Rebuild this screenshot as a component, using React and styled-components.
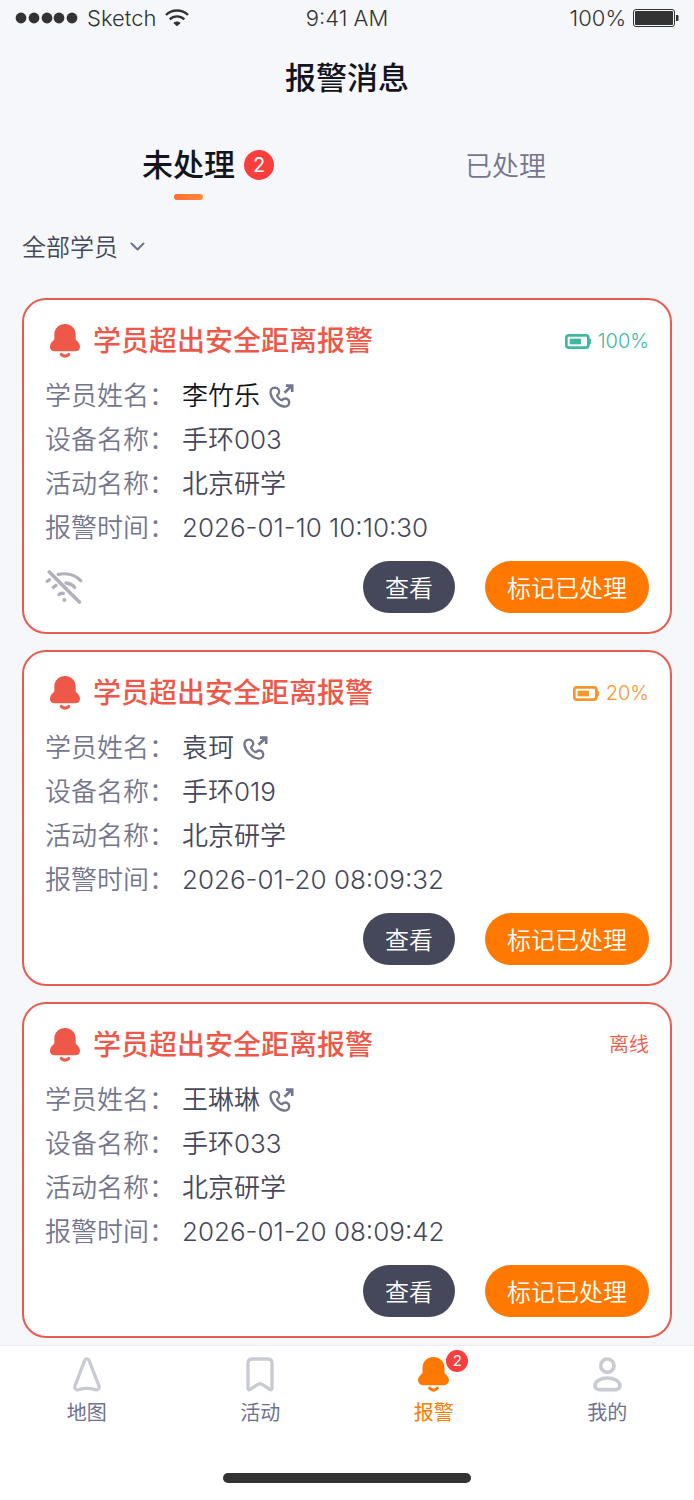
import { useState } from 'react'
import styled, { createGlobalStyle } from 'styled-components'

const GlobalStyle = createGlobalStyle`
    * {
        box-sizing: border-box;
    }
    body {
        margin: 0;
        background: #f5f7fb;
        font-family: Inter, "Noto Sans CJK SC", sans-serif;
    }
    button, select {
        font-family: inherit;
        border: 0;
        padding: 0;
        background: none;
        cursor: pointer;
    }
`

const Page = styled.div`
    display: flex;
    flex-direction: column;
    min-height: 100vh;
`
const StatusBar = styled.div`
    display: grid;
    grid-template-columns: 1fr auto 1fr;
    align-items: center;
    height: 36px;
    padding: 0 15px;
    font-size: 22px;
    font-weight: 300;
    color: #333;
`
const StatusGroup = styled.div`
    display: flex;
    align-items: center;
    gap: ${props => props.$gap};
    justify-content: ${props => props.$end ? 'flex-end' : 'flex-start'};
`
const Title = styled.h1`
    margin: 0;
    font-size: 31px;
    line-height: 84px;
    font-weight: 500;
    text-align: center;
    color: #14151c;
`
const Tabs = styled.div`
    display: grid;
    grid-template-columns: 1fr 1fr;
    padding: 20px 30px 0;
`
const Tab = styled.button`
    display: flex;
    flex-direction: column;
    align-items: center;
    height: 60px;
    font-size: ${props => props.$active ? '31px' : '27px'};
    font-weight: ${props => props.$active ? 500 : 350};
    line-height: ${props => props.$active ? '50px' : '54px'};
    color: ${props => props.$active ? '#14151c' : '#74768e'};
`
const TabText = styled.span`
    position: relative;
`
const TabLine = styled.span`
    width: 29px;
    height: 6px;
    margin-top: 4px;
    border-radius: 3px;
    background: linear-gradient(90deg, #ff6d33, #ff8a3a);
`
const Badge = styled.span`
    position: absolute;
    left: 100%;
    border-radius: 50%;
    background: #fa3e3e;
    color: #fff;
    font-weight: 400;
    text-align: center;
`
const TabBadge = styled(Badge)`
    top: 10px;
    width: 30px;
    margin-left: 9px;
    font-size: 20px;
    line-height: 30px;
`
const NavBadge = styled(Badge)`
    top: -7px;
    width: 22px;
    margin-left: -3px;
    font-size: 15px;
    line-height: 22px;
`
const Filter = styled.label`
    display: flex;
    align-items: center;
    align-self: flex-start;
    gap: 12px;
    height: 50px;
    margin: 22px 22px 26px;
`
const FilterSelect = styled.select`
    appearance: none;
    font-size: 24px;
    font-weight: 350;
    color: #45475a;
`
const Cards = styled.main`
    display: flex;
    flex-direction: column;
    gap: 16px;
    padding: 0 22px 6px;
`
const Card = styled.article`
    padding: 19px 21px;
    border: 2px solid #e65c4d;
    border-radius: 24px;
    background: #fff;
`
const CardHead = styled.div`
    display: flex;
    align-items: center;
    height: 44px;
    margin-bottom: 11px;
    padding-left: 5px;
    color: #ee5848;
`
const CardTitle = styled.h2`
    flex: 1;
    margin: 0 0 0 13px;
    font-size: 28px;
    font-weight: 500;
    line-height: 42px;
`
const DeviceState = styled.div`
    display: flex;
    align-items: center;
    gap: 7px;
    font-size: 20px;
    font-weight: 350;
    line-height: 28px;
    color: ${props => props.$color};
`
const Info = styled.dl`
    margin: 0;
    font-size: 26px;
    font-weight: 350;
    line-height: 44px;
`
const InfoRow = styled.div`
    display: flex;
    height: 44px;
`
const Label = styled.dt`
    width: 137px;
    color: #74768e;
`
const Value = styled.dd`
    display: flex;
    align-items: center;
    gap: 9px;
    margin: 0;
    color: ${props => props.$dark ? '#14151c' : '#45475a'};
`
const CallButton = styled.button`
    display: flex;
`
const CardFoot = styled.div`
    display: flex;
    align-items: center;
    margin-top: 11px;
`
const Actions = styled.div`
    display: flex;
    gap: 30px;
    margin-left: auto;
`
const Action = styled.button`
    height: 52px;
    padding: 0 22px 2px;
    border-radius: 26px;
    font-size: 24px;
    font-weight: 350;
    color: #fff;
    background: ${props => props.$primary ? '#ff7800' : '#45475a'};
`
const BottomBar = styled.footer`
    margin-top: auto;
    padding: 11px 0 17px;
    border-top: 1px solid #eff0f5;
    background: #fff;
`
const Nav = styled.nav`
    display: grid;
    grid-template-columns: repeat(4, 1fr);
`
const NavItem = styled.a`
    display: flex;
    flex-direction: column;
    align-items: center;
    gap: 6px;
    font-size: 20px;
    font-weight: 400;
    line-height: 30px;
    text-decoration: none;
    color: ${props => props.$active ? '#ff7800' : '#6f7190'};
`
const NavIcon = styled.span`
    position: relative;
    display: flex;
    color: ${props => props.$active ? '#ff7800' : '#c9cbd2'};
`
const HomeIndicator = styled.div`
    width: 248px;
    height: 10px;
    margin: 45px auto 0;
    border-radius: 5px;
    background: #333;
`

const SignalIcon = () => (
    <svg width="63" height="12" viewBox="0 0 63 12" fill="#333">
        {[6, 19, 32, 44, 57].map(x => <circle key={x} cx={x} cy="6" r="5.4" />)}
    </svg>
)

const WifiIcon = () => (
    <svg width="24" height="18" viewBox="0 0 72 54" fill="none" stroke="#333" strokeWidth="7">
        <path d="M3 18C21 0 51 0 69 18" />
        <path d="M14 31C27 19 45 19 58 31" />
        <path d="M36 52L25 42C31 36 41 36 47 42Z" fill="#333" stroke="none" />
    </svg>
)

const PhoneBattery = () => (
    <svg width="46" height="18" viewBox="0 0 46 18">
        <rect x="0.5" y="0.5" width="41" height="17" rx="2.5" fill="none" stroke="#333" />
        <rect x="2" y="2" width="38" height="14" rx="1" fill="#333" />
        <path d="M43 6h1.5a1 1 0 0 1 1 1v4a1 1 0 0 1-1 1H43z" fill="#333" />
    </svg>
)

const ChevronIcon = () => (
    <svg width="15" height="10" viewBox="0 0 15 10" fill="none" stroke="#6f7190" strokeWidth="2" strokeLinecap="round" strokeLinejoin="round">
        <path d="M1.500 1.500L7.500 7.500L13.500 1.500" />
    </svg>
)

const BellIcon = ({ width = 30, height = 34 }) => (
    <svg width={width} height={height} viewBox="0 0 90 102" fill="currentColor">
        <path d="M45 0C63 0 77 13 77 31V45C77 50 90 54 90 68C90 77 84 82 76 82H14C6 82 0 77 0 68C0 54 13 50 13 45V31C13 13 27 0 45 0Z" />
        <path d="M34 91Q45 102 56 91" fill="none" stroke="currentColor" strokeWidth="9" strokeLinecap="round" />
    </svg>
)

const BatteryIcon = () => (
    <svg width="26" height="15" viewBox="0 0 78 45" fill="currentColor">
        <rect x="4" y="4" width="66" height="37" rx="7" fill="none" stroke="currentColor" strokeWidth="8" />
        <rect x="14" y="14" width="34" height="17" />
        <path d="M70 11L76 14Q78 15 78 18V27Q78 30 76 31L70 34Z" />
    </svg>
)

const CallIcon = () => (
    <svg width="25" height="24" viewBox="0 0 74 72" fill="none" stroke="#74768e" strokeWidth="7" strokeLinejoin="round">
        <path d="M17 11C9 11 3 17 4 27C7 47 27 66 47 68C56 68 61 62 60 54C59 45 50 41 43 45C40 47 39 50 36 48C30 45 26 40 24 36C23 33 26 32 29 28C33 19 26 11 17 11Z" />
        <path d="M46 26L67 6M50 5H69V24" strokeLinejoin="miter" strokeWidth="8" />
    </svg>
)

const WifiOffIcon = () => (
    <svg width="38" height="34" viewBox="0 0 112 102" fill="none" stroke="#b0b1bb" strokeWidth="10" strokeLinecap="round">
        <path d="M12 6L102 96" strokeWidth="11" />
        <path d="M39 13C64 8 90 15 106 32" />
        <path d="M62 39C72 40 82 45 88 52" />
        <path d="M6 34L12 29" />
        <path d="M24 52L32 46" />
        <path d="M41 74C44 71 49 69 54 70" />
        <circle cx="57" cy="90" r="6" fill="#b0b1bb" stroke="none" />
    </svg>
)

const MapIcon = () => (
    <svg width="28" height="35" viewBox="0 0 84 105" fill="none" stroke="currentColor" strokeWidth="10" strokeLinejoin="round">
        <path d="M35 10C37 4 46 4 48 10L78 87C80 95 75 100 67 98C50 93 33 93 17 98C9 100 4 95 6 87Z" />
    </svg>
)

const ActivityIcon = () => (
    <svg width="28" height="35" viewBox="0 0 84 105" fill="none" stroke="currentColor" strokeWidth="10" strokeLinejoin="round">
        <path d="M19 6H65Q78 6 78 19V94Q78 101 71 97L50 83Q42 78 34 83L13 97Q6 101 6 94V19Q6 6 19 6Z" />
    </svg>
)

const MineIcon = () => (
    <svg width="29" height="35" viewBox="0 0 87 105" fill="none" stroke="currentColor" strokeWidth="11">
        <circle cx="43" cy="26" r="20" />
        <path d="M22 98H65C75 98 81 93 81 86C81 73 64 63 43 63C23 63 6 73 6 86C6 93 12 98 22 98Z" />
    </svg>
)

const alarms = [
    { id: 1, name: '李竹乐', dark: true, device: '手环003', time: '2026-01-10 10:10:30', battery: '100%', color: '#3fb9a2', noSignal: true },
    { id: 2, name: '袁珂', device: '手环019', time: '2026-01-20 08:09:32', battery: '20%', color: '#f7962b' },
    { id: 3, name: '王琳琳', device: '手环033', time: '2026-01-20 08:09:42', color: '#ee5848' },
]

const navItems = [
    { name: '地图', icon: <MapIcon /> },
    { name: '活动', icon: <ActivityIcon /> },
    { name: '报警', icon: <BellIcon width={31} height={35} />, active: true },
    { name: '我的', icon: <MineIcon /> },
]

const AlarmCard = ({ alarm }) => (
    <Card>
        <CardHead>
            <BellIcon />
            <CardTitle>学员超出安全距离报警</CardTitle>
            <DeviceState $color={alarm.color}>
                {alarm.battery && <BatteryIcon />}
                {alarm.battery || '离线'}
            </DeviceState>
        </CardHead>
        <Info>
            <InfoRow>
                <Label>学员姓名：</Label>
                <Value $dark={alarm.dark}>
                    {alarm.name}
                    <CallButton aria-label="拨打电话"><CallIcon /></CallButton>
                </Value>
            </InfoRow>
            <InfoRow>
                <Label>设备名称：</Label>
                <Value>{alarm.device}</Value>
            </InfoRow>
            <InfoRow>
                <Label>活动名称：</Label>
                <Value>北京研学</Value>
            </InfoRow>
            <InfoRow>
                <Label>报警时间：</Label>
                <Value>{alarm.time}</Value>
            </InfoRow>
        </Info>
        <CardFoot>
            {alarm.noSignal && <WifiOffIcon />}
            <Actions>
                <Action>查看</Action>
                <Action $primary>标记已处理</Action>
            </Actions>
        </CardFoot>
    </Card>
)

const App = () => {
    const [tab, setTab] = useState(0)

    return (
        <Page>
            <GlobalStyle />
            <StatusBar>
                <StatusGroup $gap="9px">
                    <SignalIcon />
                    Sketch
                    <WifiIcon />
                </StatusGroup>
                <span>9:41 AM</span>
                <StatusGroup $gap="7px" $end>
                    100%
                    <PhoneBattery />
                </StatusGroup>
            </StatusBar>
            <Title>报警消息</Title>
            <Tabs>
                <Tab $active={tab === 0} onClick={() => setTab(0)}>
                    <TabText>未处理<TabBadge>2</TabBadge></TabText>
                    {tab === 0 && <TabLine />}
                </Tab>
                <Tab $active={tab === 1} onClick={() => setTab(1)}>
                    <TabText>已处理</TabText>
                    {tab === 1 && <TabLine />}
                </Tab>
            </Tabs>
            <Filter>
                <FilterSelect aria-label="学员">
                    <option>全部学员</option>
                </FilterSelect>
                <ChevronIcon />
            </Filter>
            <Cards>
                {alarms.map(alarm => <AlarmCard key={alarm.id} alarm={alarm} />)}
            </Cards>
            <BottomBar>
                <Nav>
                    {navItems.map(item => (
                        <NavItem key={item.name} href="#" $active={item.active}>
                            <NavIcon $active={item.active}>
                                {item.icon}
                                {item.active && <NavBadge>2</NavBadge>}
                            </NavIcon>
                            {item.name}
                        </NavItem>
                    ))}
                </Nav>
                <HomeIndicator />
            </BottomBar>
        </Page>
    )
}

export default App
